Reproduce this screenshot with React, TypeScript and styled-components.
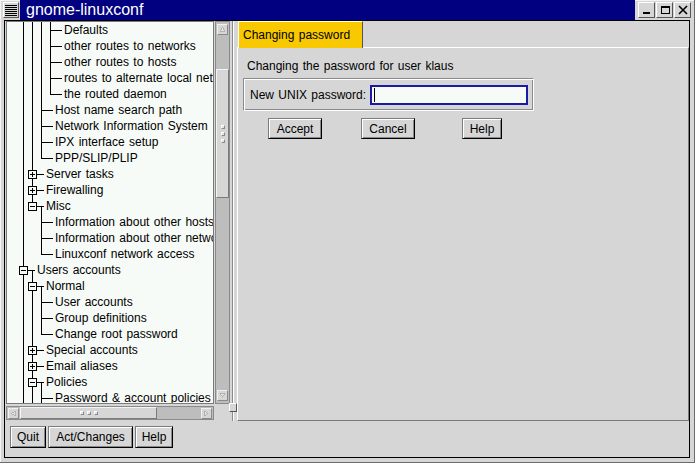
import React from 'react'
import styled, { createGlobalStyle } from 'styled-components'

type TreeNode = {
    label: string
    guides: boolean[]
    kind: 'leaf' | 'open' | 'closed'
    last?: boolean
}

const g = (...v: number[]) => v.map(Boolean)

const tree: TreeNode[] = [
    { label: 'Defaults', guides: g(1, 1, 1), kind: 'leaf' },
    { label: 'other routes to networks', guides: g(1, 1, 1), kind: 'leaf' },
    { label: 'other routes to hosts', guides: g(1, 1, 1), kind: 'leaf' },
    { label: 'routes to alternate local networks', guides: g(1, 1, 1), kind: 'leaf' },
    { label: 'the routed daemon', guides: g(1, 1, 1), kind: 'leaf', last: true },
    { label: 'Host name search path', guides: g(1, 1), kind: 'leaf' },
    { label: 'Network Information System', guides: g(1, 1), kind: 'leaf' },
    { label: 'IPX interface setup', guides: g(1, 1), kind: 'leaf' },
    { label: 'PPP/SLIP/PLIP', guides: g(1, 1), kind: 'leaf', last: true },
    { label: 'Server tasks', guides: g(1), kind: 'closed' },
    { label: 'Firewalling', guides: g(1), kind: 'closed' },
    { label: 'Misc', guides: g(1), kind: 'open', last: true },
    { label: 'Information about other hosts', guides: g(1, 0), kind: 'leaf' },
    { label: 'Information about other networks', guides: g(1, 0), kind: 'leaf' },
    { label: 'Linuxconf network access', guides: g(1, 0), kind: 'leaf', last: true },
    { label: 'Users accounts', guides: [], kind: 'open' },
    { label: 'Normal', guides: g(1), kind: 'open' },
    { label: 'User accounts', guides: g(1, 1), kind: 'leaf' },
    { label: 'Group definitions', guides: g(1, 1), kind: 'leaf' },
    { label: 'Change root password', guides: g(1, 1), kind: 'leaf', last: true },
    { label: 'Special accounts', guides: g(1), kind: 'closed' },
    { label: 'Email aliases', guides: g(1), kind: 'closed' },
    { label: 'Policies', guides: g(1), kind: 'open' },
    { label: 'Password & account policies', guides: g(1, 1), kind: 'leaf' },
]

// tree connectors, 9px per level, row is 16px high
function TreeLines({ node }: { node: TreeNode }) {
    const depth = node.guides.length
    const L = 4 + 9 * depth
    const x = L + 0.5
    return (
        <svg width={9 * depth + 16} height={16} shapeRendering="crispEdges" style={{ flex: 'none' }}>
            <g stroke="#000" strokeWidth={1} fill="none">
                {node.guides.map((on, i) =>
                    on ? <line key={i} x1={4.5 + 9 * i} y1={0} x2={4.5 + 9 * i} y2={16} /> : null
                )}
                {node.kind === 'leaf' ? (
                    <>
                        <line x1={x} y1={0} x2={x} y2={node.last ? 9 : 16} />
                        <line x1={L} y1={8.5} x2={L + 12} y2={8.5} />
                    </>
                ) : (
                    <>
                        <line x1={x} y1={0} x2={x} y2={4} />
                        {!node.last && <line x1={x} y1={13} x2={x} y2={16} />}
                        <rect x={L - 3.5} y={4.5} width={8} height={8} fill="#f7fbf7" />
                        <line x1={L - 2} y1={8.5} x2={L + 3} y2={8.5} />
                        {node.kind === 'closed' && <line x1={x} y1={6} x2={x} y2={11} />}
                        <line x1={L + 5} y1={8.5} x2={L + 12} y2={8.5} />
                        {node.kind === 'open' && <line x1={x + 9} y1={8} x2={x + 9} y2={16} />}
                    </>
                )}
            </g>
        </svg>
    )
}

function Arrow({ dir }: { dir: 'up' | 'down' | 'left' | 'right' }) {
    const pts = {
        up: '2.5,7.5 5.5,2.5 8.5,7.5',
        down: '2.5,2.5 5.5,7.5 8.5,2.5',
        left: '7.5,2.5 2.5,5.5 7.5,8.5',
        right: '2.5,2.5 7.5,5.5 2.5,8.5',
    }[dir]
    return (
        <svg width={11} height={11} viewBox="0 0 11 11" shapeRendering="crispEdges">
            <polygon points={pts} fill="#e4e4e4" stroke="#a8a8a8" strokeWidth={1} />
        </svg>
    )
}

function App() {
    return (
        <>
            <GlobalStyle />
            <Window>
                <TitleBar>
                    <MenuButton>
                        <svg width={14} height={14} viewBox="0 0 14 14" shapeRendering="crispEdges">
                            {[2, 4, 6, 8, 10, 12].map(y => (
                                <line key={y} x1={1} y1={y + 0.5} x2={13} y2={y + 0.5} stroke="#000" />
                            ))}
                        </svg>
                    </MenuButton>
                    <Caption>gnome-linuxconf</Caption>
                    <FrameButtons>
                        <FrameButton>
                            <svg width={14} height={14} viewBox="0 0 14 14" shapeRendering="crispEdges">
                                <rect x={3} y={9} width={7} height={2} fill="#000" />
                            </svg>
                        </FrameButton>
                        <FrameButton>
                            <svg width={14} height={14} viewBox="0 0 14 14" shapeRendering="crispEdges">
                                <rect x={3.5} y={3.5} width={8} height={7} fill="none" stroke="#000" />
                                <rect x={3} y={3} width={9} height={2} fill="#000" />
                            </svg>
                        </FrameButton>
                        <FrameButton>
                            <svg width={14} height={14} viewBox="0 0 14 14">
                                <path d="M3 3 L11 11 M11 3 L3 11" stroke="#000" strokeWidth={1.6} />
                            </svg>
                        </FrameButton>
                    </FrameButtons>
                </TitleBar>

                <Client>
                    <Paned>
                        <LeftPane>
                            <TreeList>
                                {tree.map((n, i) => (
                                    <TreeRow key={i}>
                                        <TreeLines node={n} />
                                        <TreeLabel>{n.label}</TreeLabel>
                                    </TreeRow>
                                ))}
                            </TreeList>
                            <VScroll>
                                <ScrollArrow><Arrow dir="up" /></ScrollArrow>
                                <VThumb $offset={34} $size={129}>
                                    <Grip $vertical><GripDot /><GripDot /><GripDot /></Grip>
                                </VThumb>
                                <ScrollArrow $end><Arrow dir="down" /></ScrollArrow>
                            </VScroll>
                            <HScroll>
                                <ScrollArrow><Arrow dir="left" /></ScrollArrow>
                                <HThumb $offset={1} $size={137}>
                                    <Grip><GripDot /><GripDot /><GripDot /></Grip>
                                </HThumb>
                                <ScrollArrow $end><Arrow dir="right" /></ScrollArrow>
                            </HScroll>
                        </LeftPane>

                        <Gutter>
                            <PaneHandle />
                        </Gutter>

                        <Notebook>
                            <TabRow>
                                <Tab>Changing password</Tab>
                            </TabRow>
                            <Page>
                                <Intro>Changing the password for user klaus</Intro>
                                <Frame>
                                    <FieldLabel>New UNIX password:</FieldLabel>
                                    <Entry>
                                        <Caret />
                                    </Entry>
                                </Frame>
                                <DialogButtons>
                                    <Button $w={54} $h={21}>Accept</Button>
                                    <Button $w={54} $h={21} $ml={39}>Cancel</Button>
                                    <Button $w={40} $h={21} $ml={47}>Help</Button>
                                </DialogButtons>
                            </Page>
                        </Notebook>
                    </Paned>

                    <BottomBar>
                        <Button $w={36} $h={22}>Quit</Button>
                        <Button $w={85} $h={22}>Act/Changes</Button>
                        <Button $w={38} $h={22}>Help</Button>
                    </BottomBar>
                </Client>
            </Window>
        </>
    )
}

export default App

const GlobalStyle = createGlobalStyle`
  html, body {
    margin: 0;
    padding: 0;
    background: #d6d6d6;
  }
  body {
    font-family: "Liberation Sans", Arial, sans-serif;
    font-size: 12px;
    word-spacing: 1px;
    color: #000;
  }
`

const Window = styled.div`
  width: 695px;
  height: 463px;
  box-sizing: border-box;
  background: #d6d6d6;
  padding: 0 5px 5px 4px;
  display: flex;
  flex-direction: column;
  box-shadow: inset -1px -1px 0 #6c6c6c, inset 1px 1px 0 #f4f4f4;
`

const TitleBar = styled.div`
  height: 20px;
  margin: 0 -5px 0 -4px;
  padding: 0 4px 0 3px;
  display: flex;
  align-items: center;
  flex: none;
`

const bevel = `
  box-sizing: border-box;
  background: #d6d6d6;
  border: 1px solid;
  border-color: #ffffff #555555 #555555 #ffffff;
`

const MenuButton = styled.div`
  ${bevel}
  width: 16px;
  height: 16px;
  display: flex;
  align-items: center;
  justify-content: center;
`

const Caption = styled.div`
  flex: 1;
  align-self: stretch;
  margin-left: 1px;
  background: #000080;
  color: #ffffff;
  font-size: 16px;
  line-height: 20px;
  padding-left: 6px;
`

const FrameButtons = styled.div`
  display: flex;
  gap: 1px;
  margin-left: 3px;
`

const FrameButton = styled.div`
  ${bevel}
  width: 17px;
  height: 16px;
  display: flex;
  align-items: center;
  justify-content: center;
`

const Client = styled.div`
  flex: 1;
  border: 1px solid #000;
  display: flex;
  flex-direction: column;
`

const Paned = styled.div`
  display: flex;
  height: 400px;
  flex: none;
`

const LeftPane = styled.div`
  width: 225px;
  box-sizing: border-box;
  padding-left: 1px;
  display: grid;
  grid-template-columns: 208px 15px;
  grid-template-rows: 383px 14px;
  column-gap: 1px;
  row-gap: 2px;
`

const TreeList = styled.div`
  box-sizing: border-box;
  border: 1px solid #7a7a7a;
  background: #f7fbf7;
  overflow: hidden;
  padding-left: 12px;
`

const TreeRow = styled.div`
  display: flex;
  height: 16px;
  white-space: nowrap;
`

const TreeLabel = styled.span`
  margin-left: 2px;
  line-height: 16px;
`

const VScroll = styled.div`
  box-sizing: border-box;
  border: 1px solid #8a8a8a;
  background: #bdbdbd;
  padding: 2px 1px;
  display: flex;
  flex-direction: column;
  align-items: center;
`

const HScroll = styled.div`
  box-sizing: border-box;
  border: 1px solid #8a8a8a;
  background: #bdbdbd;
  padding: 0 1px;
  display: flex;
  align-items: center;
`

const ScrollArrow = styled.div<{ $end?: boolean }>`
  ${bevel}
  border-color: #f0f0f0 #8a8a8a #8a8a8a #f0f0f0;
  width: 11px;
  height: 11px;
  display: flex;
  align-items: center;
  justify-content: center;
  flex: none;
  margin-top: ${p => (p.$end ? 'auto' : '0')};
  margin-left: ${p => (p.$end ? 'auto' : '0')};
  & svg {
    display: block;
  }
`

const VThumb = styled.div<{ $offset: number; $size: number }>`
  ${bevel}
  border-color: #f4f4f4 #7a7a7a #7a7a7a #f4f4f4;
  width: 13px;
  height: ${p => p.$size}px;
  margin-top: ${p => p.$offset}px;
  display: flex;
  align-items: center;
  justify-content: center;
`

const HThumb = styled.div<{ $offset: number; $size: number }>`
  ${bevel}
  border-color: #f4f4f4 #7a7a7a #7a7a7a #f4f4f4;
  height: 12px;
  width: ${p => p.$size}px;
  margin-left: ${p => p.$offset}px;
  display: flex;
  align-items: center;
  justify-content: center;
`

const Grip = styled.div<{ $vertical?: boolean }>`
  display: flex;
  flex-direction: ${p => (p.$vertical ? 'column' : 'row')};
  gap: 3px;
`

const GripDot = styled.span`
  width: 4px;
  height: 4px;
  box-sizing: border-box;
  border: 1px solid;
  border-color: #ffffff #8a8a8a #8a8a8a #ffffff;
  background: #e2e2e2;
`

const Gutter = styled.div`
  width: 7px;
  position: relative;
  background: linear-gradient(
    to right,
    transparent 2px,
    #8a8a8a 2px,
    #8a8a8a 3px,
    #ffffff 3px,
    #ffffff 4px,
    transparent 4px
  );
`

const PaneHandle = styled.div`
  ${bevel}
  position: absolute;
  left: -1px;
  bottom: 9px;
  width: 8px;
  height: 9px;
`

const Notebook = styled.div`
  flex: 1;
  display: flex;
  flex-direction: column;
`

const TabRow = styled.div`
  height: 26px;
  display: flex;
  flex: none;
`

const Tab = styled.div`
  position: relative;
  z-index: 1;
  margin-left: 1px;
  margin-bottom: -1px;
  width: 125px;
  box-sizing: border-box;
  background: #f8c800;
  border-left: 1px solid #ffffff;
  border-top: 1px solid #ffffff;
  border-right: 1px solid #555555;
  padding-left: 4px;
  line-height: 26px;
`

const Page = styled.div`
  flex: 1;
  border: 1px solid;
  border-color: #ffffff #7a7a7a #7a7a7a #ffffff;
  padding: 10px 0 0 5px;
`

const Intro = styled.div`
  padding-left: 4px;
  line-height: 16px;
`

const Frame = styled.div`
  margin-top: 4px;
  width: 291px;
  height: 33px;
  box-sizing: border-box;
  border: 1px solid;
  border-color: #8a8a8a #ffffff #ffffff #8a8a8a;
  box-shadow: inset 1px 1px 0 #ffffff, inset -1px -1px 0 #8a8a8a;
  padding: 5px 5px 4px 6px;
  display: flex;
  align-items: center;
`

const FieldLabel = styled.span`
  white-space: nowrap;
`

const Entry = styled.div`
  flex: 1;
  margin-left: 4px;
  height: 20px;
  box-sizing: border-box;
  border: 2px solid #1a1aa6;
  background: #f7fbf7;
  padding: 1px 2px;
  display: flex;
`

const Caret = styled.span`
  width: 1px;
  height: 14px;
  background: #000;
`

const DialogButtons = styled.div`
  margin-top: 7px;
  padding-left: 25px;
  display: flex;
`

const Button = styled.div<{ $w: number; $h: number; $ml?: number }>`
  width: ${p => p.$w}px;
  height: ${p => p.$h}px;
  margin-left: ${p => p.$ml ?? 0}px;
  box-sizing: border-box;
  background: #d6d6d6;
  border: 1px solid;
  border-color: #7c7c7c #000000 #000000 #7c7c7c;
  box-shadow: inset 1px 1px 0 #ffffff, inset -1px -1px 0 #8a8a8a;
  display: flex;
  align-items: center;
  justify-content: center;
  white-space: nowrap;
`

const BottomBar = styled.div`
  padding: 5px 0 0 5px;
  display: flex;
  gap: 2px;
`
